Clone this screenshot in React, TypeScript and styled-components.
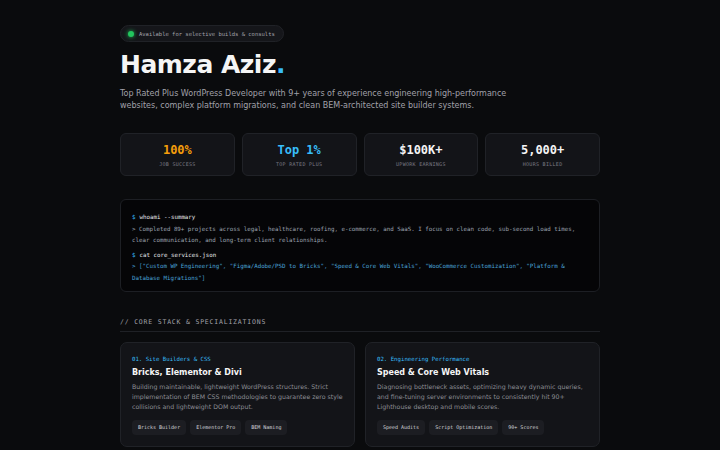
import { createGlobalStyle, styled } from "styled-components"

const Global = createGlobalStyle`
    html, body {
        margin: 0;
        padding: 0;
        background: #0a0b0d;
    }
    body {
        font-family: "DejaVu Sans", "Liberation Sans", sans-serif;
        color: #f3f4f6;
    }
    * { box-sizing: border-box; }
`

const mono = `"DejaVu Sans Mono", "Liberation Mono", monospace`

const Page = styled.main`
    width: 480px;
    margin: 0 auto;
    padding: 25px 0 40px;
`

const Badge = styled.div`
    display: flex;
    width: fit-content;
    align-items: center;
    gap: 5px;
    height: 17px;
    padding: 0 8px 0 7px;
    border-radius: 9px;
    background: #15161a;
    border: 1px solid #202227;
    font-family: ${mono};
    font-size: 5.5px;
    color: #a1a1aa;
`

const Dot = styled.span`
    width: 6px;
    height: 6px;
    border-radius: 50%;
    background: #22c55e;
    box-shadow: 0 0 4px #22c55e;
`

const Title = styled.h1`
    margin: 8px 0 0;
    font-size: 25px;
    line-height: 30px;
    font-weight: 700;
    letter-spacing: -0.5px;
    color: #f5f5f5;
    span { color: #38bdf8; }
`

const Lead = styled.p`
    margin: 8px 0 0;
    width: 420px;
    font-size: 8px;
    line-height: 12px;
    color: #a1a1aa;
`

const Stats = styled.section`
    display: grid;
    grid-template-columns: repeat(4, 1fr);
    gap: 7px;
    margin-top: 21px;
`

const Stat = styled.div`
    height: 43px;
    border-radius: 6px;
    background: #131418;
    border: 1px solid #202227;
    display: flex;
    flex-direction: column;
    align-items: center;
    justify-content: center;
    gap: 4px;
    font-family: ${mono};
`

const StatValue = styled.div<{ $color: string }>`
    font-size: 12px;
    font-weight: 700;
    color: ${p => p.$color};
`

const StatLabel = styled.div`
    font-size: 5px;
    letter-spacing: 0.3px;
    color: #7a7a84;
    text-transform: uppercase;
`

const Terminal = styled.section`
    margin-top: 23px;
    padding: 12px 11px 7px;
    border-radius: 6px;
    background: #050507;
    border: 1px solid #1d1f24;
    font-family: ${mono};
    font-size: 5.8px;
    line-height: 11.5px;
`

const Cmd = styled.div<{ $gap?: boolean }>`
    color: #e5e7eb;
    margin-top: ${p => (p.$gap ? "3px" : "0")};
    span { color: #38bdf8; margin-right: 4px; }
`

const Out = styled.div<{ $accent?: boolean }>`
    color: ${p => (p.$accent ? "#4aa3d8" : "#9ca3af")};
`

const SectionHead = styled.h2`
    margin: 26px 0 0;
    padding-bottom: 5px;
    border-bottom: 1px solid #1f2126;
    font-family: ${mono};
    font-size: 6.5px;
    font-weight: 400;
    letter-spacing: 0.8px;
    color: #a1a1aa;
`

const Cards = styled.section`
    display: grid;
    grid-template-columns: 1fr 1fr;
    gap: 10px;
    margin-top: 10px;
`

const Card = styled.article`
    padding: 13px 11px 11px;
    border-radius: 7px;
    background: #131418;
    border: 1px solid #202227;
`

const CardTag = styled.div`
    font-family: ${mono};
    font-size: 5.7px;
    color: #38bdf8;
`

const CardTitle = styled.h3`
    margin: 6px 0 0;
    font-size: 8px;
    font-weight: 700;
    color: #f5f5f5;
`

const CardText = styled.p`
    margin: 5px 0 0;
    font-size: 6.25px;
    line-height: 10px;
    color: #8b8d94;
`

const Chips = styled.div`
    display: flex;
    gap: 4px;
    margin-top: 8px;
`

const Chip = styled.span`
    padding: 0 6px;
    height: 15px;
    line-height: 15px;
    border-radius: 4px;
    background: #1c1d22;
    font-family: ${mono};
    font-size: 5px;
    color: #d4d4d8;
`

const stats = [
    { value: "100%", label: "Job Success", color: "#f59e0b" },
    { value: "Top 1%", label: "Top Rated Plus", color: "#38bdf8" },
    { value: "$100K+", label: "Upwork Earnings", color: "#f5f5f5" },
    { value: "5,000+", label: "Hours Billed", color: "#f5f5f5" },
]

const cards = [
    {
        tag: "01. Site Builders & CSS",
        title: "Bricks, Elementor & Divi",
        text: "Building maintainable, lightweight WordPress structures. Strict implementation of BEM CSS methodologies to guarantee zero style collisions and lightweight DOM output.",
        chips: ["Bricks Builder", "Elementor Pro", "BEM Naming"],
    },
    {
        tag: "02. Engineering Performance",
        title: "Speed & Core Web Vitals",
        text: "Diagnosing bottleneck assets, optimizing heavy dynamic queries, and fine-tuning server environments to consistently hit 90+ Lighthouse desktop and mobile scores.",
        chips: ["Speed Audits", "Script Optimization", "90+ Scores"],
    },
]

const App = () => {
    return (
        <>
            <Global />
            <Page>
                <Badge>
                    <Dot />
                    Available for selective builds &amp; consults
                </Badge>
                <Title>Hamza Aziz<span>.</span></Title>
                <Lead>
                    Top Rated Plus WordPress Developer with 9+ years of experience engineering high-performance
                    websites, complex platform migrations, and clean BEM-architected site builder systems.
                </Lead>

                <Stats>
                    {stats.map(s => (
                        <Stat key={s.label}>
                            <StatValue $color={s.color}>{s.value}</StatValue>
                            <StatLabel>{s.label}</StatLabel>
                        </Stat>
                    ))}
                </Stats>

                <Terminal>
                    <Cmd><span>$</span>whoami --summary</Cmd>
                    <Out>
                        &gt; Completed 89+ projects across legal, healthcare, roofing, e-commerce, and SaaS. I focus on clean code, sub-second load times,
                        clear communication, and long-term client relationships.
                    </Out>
                    <Cmd $gap><span>$</span>cat core_services.json</Cmd>
                    <Out $accent>
                        &gt; ["Custom WP Engineering", "Figma/Adobe/PSD to Bricks", "Speed &amp; Core Web Vitals", "WooCommerce Customization", "Platform &amp; Database Migrations"]
                    </Out>
                </Terminal>

                <SectionHead>// CORE STACK &amp; SPECIALIZATIONS</SectionHead>

                <Cards>
                    {cards.map(c => (
                        <Card key={c.tag}>
                            <CardTag>{c.tag}</CardTag>
                            <CardTitle>{c.title}</CardTitle>
                            <CardText>{c.text}</CardText>
                            <Chips>
                                {c.chips.map(ch => <Chip key={ch}>{ch}</Chip>)}
                            </Chips>
                        </Card>
                    ))}
                </Cards>
            </Page>
        </>
    )
}

export default App
